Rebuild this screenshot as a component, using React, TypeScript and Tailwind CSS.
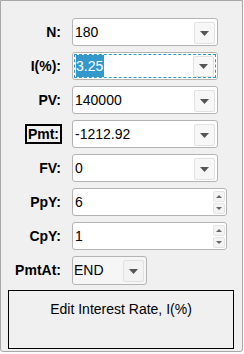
import React from "react";

const Arrow = () => (
  <svg width="9" height="5" viewBox="0 0 9 5" className="block">
    <path d="M0 0 H9 L4.5 5 Z" fill="#555" />
  </svg>
);

const DropBtn = () => (
  <div className="w-[21px] h-[22px] mt-[3px] mb-[2px] mr-[2px] rounded-[2px] border border-[#e2e2e2] bg-[#f7f7f7] flex items-center justify-center">
    <Arrow />
  </div>
);

const Label = ({ children, boxed }: { children: React.ReactNode; boxed?: boolean }) => (
  <div className="w-[61px] flex justify-end shrink-0">
    {boxed ? (
      <div className="border-2 border-black px-[1px] h-[20px] flex items-center leading-none">{children}</div>
    ) : (
      <div className="pr-[1px]">{children}</div>
    )}
  </div>
);

const ComboRow = ({ label, value, focused, boxed }: { label: string; value: string; focused?: boolean; boxed?: boolean }) => (
  <div className="flex items-center h-[28px]">
    <Label boxed={boxed}>{label}</Label>
    <div className="ml-[10px] w-[146px] h-[28px] rounded-[3px] border border-[#b4b4b4] bg-white flex items-stretch">
      {focused ? (
        <div className="flex-1 m-[1px] border border-dashed border-[#2d9ad0] flex items-stretch relative">
          <div className="flex items-stretch flex-1 pl-[1px]">
            <span className="bg-[#3399cc] text-white font-normal flex items-center pr-[1px]">{value}</span>
            <div className="flex-1" />
          </div>
          <div className="w-[21px] h-[21px] mt-[1px] mr-[1px] rounded-[2px] border border-[#e2e2e2] bg-[#f7f7f7] flex items-center justify-center">
            <Arrow />
          </div>
        </div>
      ) : (
        <>
          <div className="flex-1 pl-[2px] flex items-center font-normal">{value}</div>
          <DropBtn />
        </>
      )}
    </div>
  </div>
);

const SpinRow = ({ label, value }: { label: string; value: string }) => (
  <div className="flex items-center h-[28px]">
    <Label>{label}</Label>
    <div className="ml-[10px] w-[155px] h-[28px] rounded-[3px] border border-[#b4b4b4] bg-white flex items-stretch">
      <div className="flex-1 pl-[2px] flex items-center font-normal">{value}</div>
      <div className="flex flex-col justify-center gap-[1px] mr-[1px] my-[1px]">
        <div className="w-[12px] h-[11px] rounded-[2px] bg-[#f4f4f4] border border-[#e4e4e4] flex items-center justify-center">
          <svg width="6" height="3" viewBox="0 0 6 3"><path d="M0 3 H6 L3 0 Z" fill="#666" /></svg>
        </div>
        <div className="w-[12px] h-[11px] rounded-[2px] bg-[#f4f4f4] border border-[#e4e4e4] flex items-center justify-center">
          <svg width="6" height="3" viewBox="0 0 6 3"><path d="M0 0 H6 L3 3 Z" fill="#666" /></svg>
        </div>
      </div>
    </div>
  </div>
);

export default function App() {
  return (
    <div className="w-[244px] h-[354px] bg-[#fafafa]" style={{ fontFamily: '"Liberation Sans", Arial, sans-serif' }}>
      <div className="w-[243px] h-[352px] border border-[#a8a8a8] rounded-b-[3px] bg-[#f0f0f0] flex flex-col pt-[17px] text-[14px] font-bold text-black">
        <div className="flex flex-col gap-[6px]">
          <ComboRow label="N:" value="180" />
          <ComboRow label="I(%):" value="3.25" focused />
          <ComboRow label="PV:" value="140000" />
          <ComboRow label="Pmt:" value="-1212.92" boxed />
          <ComboRow label="FV:" value="0" />
          <SpinRow label="PpY:" value="6" />
          <SpinRow label="CpY:" value="1" />
          <div className="flex items-center h-[29px]">
            <Label>PmtAt:</Label>
            <div className="ml-[10px] w-[75px] h-[29px] rounded-[3px] border border-[#b4b4b4] bg-[#f6f6f6] flex items-stretch">
              <div className="flex-1 pl-[1px] flex items-center font-normal">END</div>
              <div className="w-[21px] h-[22px] mt-[3px] mb-[2px] mr-[2px] rounded-[2px] border border-[#e0e0e0] bg-[#f3f3f3] flex items-center justify-center">
                <Arrow />
              </div>
            </div>
          </div>
        </div>
        <div className="mt-[5px] ml-[7px] w-[226px] h-[59px] border border-black flex justify-center pt-[8px] font-normal">
          Edit Interest Rate, I(%)
        </div>
      </div>
    </div>
  );
}
